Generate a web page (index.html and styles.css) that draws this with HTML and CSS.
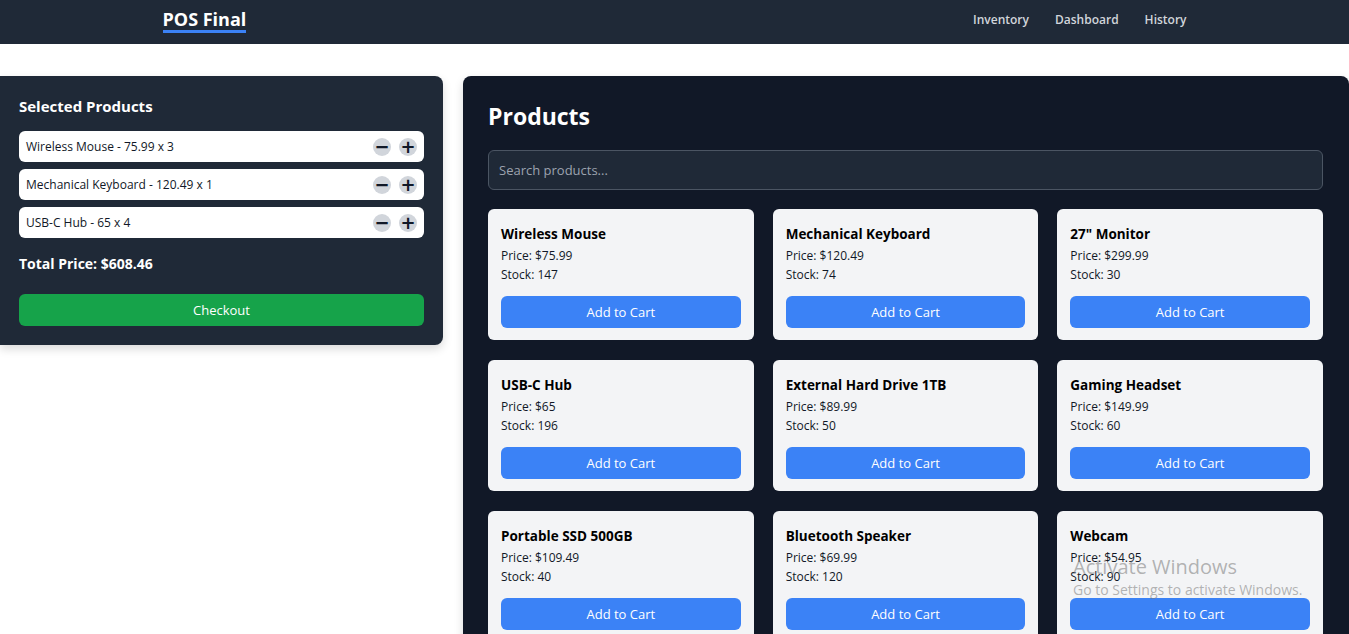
FILE: index.html
```html
<!DOCTYPE html>
<html lang="en">
<head>
<meta charset="utf-8">
<title>POS Final</title>
<link rel="stylesheet" href="styles.css">
</head>
<body>
<nav class="navbar">
  <div class="nav-inner">
    <a class="brand" href="#">POS Final</a>
    <div class="nav-links">
      <a href="#">Inventory</a>
      <a href="#">Dashboard</a>
      <a href="#">History</a>
    </div>
  </div>
</nav>
<main class="layout">
  <aside class="cart">
    <h2 class="cart-title">Selected Products</h2>
    <ul class="cart-list">
      <li class="cart-item"><span>Wireless Mouse - 75.99 x 3</span><span class="qty"><button class="round">&minus;</button><button class="round">+</button></span></li>
      <li class="cart-item"><span>Mechanical Keyboard - 120.49 x 1</span><span class="qty"><button class="round">&minus;</button><button class="round">+</button></span></li>
      <li class="cart-item"><span>USB-C Hub - 65 x 4</span><span class="qty"><button class="round">&minus;</button><button class="round">+</button></span></li>
    </ul>
    <p class="total">Total Price: $608.46</p>
    <button class="checkout">Checkout</button>
  </aside>
  <section class="products">
    <h1 class="products-title">Products</h1>
    <input class="search" type="text" placeholder="Search products...">
    <div class="grid">
      <div class="card"><h3>Wireless Mouse</h3><p>Price: $75.99</p><p>Stock: 147</p><button class="add">Add to Cart</button></div>
      <div class="card"><h3>Mechanical Keyboard</h3><p>Price: $120.49</p><p>Stock: 74</p><button class="add">Add to Cart</button></div>
      <div class="card"><h3>27" Monitor</h3><p>Price: $299.99</p><p>Stock: 30</p><button class="add">Add to Cart</button></div>
      <div class="card"><h3>USB-C Hub</h3><p>Price: $65</p><p>Stock: 196</p><button class="add">Add to Cart</button></div>
      <div class="card"><h3>External Hard Drive 1TB</h3><p>Price: $89.99</p><p>Stock: 50</p><button class="add">Add to Cart</button></div>
      <div class="card"><h3>Gaming Headset</h3><p>Price: $149.99</p><p>Stock: 60</p><button class="add">Add to Cart</button></div>
      <div class="card"><h3>Portable SSD 500GB</h3><p>Price: $109.49</p><p>Stock: 40</p><button class="add">Add to Cart</button></div>
      <div class="card"><h3>Bluetooth Speaker</h3><p>Price: $69.99</p><p>Stock: 120</p><button class="add">Add to Cart</button></div>
      <div class="card"><h3>Webcam</h3><p>Price: $54.95</p><p>Stock: 90</p><button class="add">Add to Cart</button></div>
    </div>
  </section>
</main>
<div class="watermark">
  <div class="wm-big">Activate Windows</div>
  <div class="wm-small">Go to Settings to activate Windows.</div>
</div>
</body>
</html>
```
FILE: styles.css
```css
* { box-sizing: border-box; }
html, body { margin: 0; padding: 0; }
body {
  font-family: "Segoe UI", "Open Sans", "Noto Sans", sans-serif;
  background: #ffffff;
  color: #111827;
  overflow: hidden;
}
.navbar {
  background: #1f2937;
  height: 44px;
}
.nav-inner {
  max-width: 1024px;
  margin: 0 auto;
  height: 44px;
  padding-bottom: 6px;
  display: flex;
  align-items: center;
  justify-content: space-between;
}
.brand {
  color: #ffffff;
  font-weight: 700;
  font-size: 18px;
  text-decoration: none;
  line-height: 22px;
  border-bottom: 3px solid #3b82f6;
  margin-top: 3px;
}
.nav-links {
  display: flex;
  gap: 26px;
}
.nav-links a {
  color: #d1d5db;
  font-size: 12px;
  font-weight: 600;
  text-decoration: none;
}
.layout {
  display: grid;
  grid-template-columns: 1fr 2fr;
  gap: 20px;
  margin-top: 32px;
  align-items: start;
}
.cart {
  min-width: 0;
  background: #1f2937;
  border-radius: 0 8px 8px 0;
  padding: 19px 19px 19px;
  box-shadow: 0 4px 10px rgba(0,0,0,0.15);
}
.cart-title {
  margin: 0 0 14px;
  color: #ffffff;
  font-size: 15px;
  font-weight: 700;
  line-height: 22px;
}
.cart-list {
  list-style: none;
  margin: 0;
  padding: 0;
  display: flex;
  flex-direction: column;
  gap: 7px;
}
.cart-item {
  background: #ffffff;
  border-radius: 6px;
  height: 31px;
  padding: 0 7px;
  display: flex;
  align-items: center;
  justify-content: space-between;
  font-size: 12px;
  color: #111827;
}
.qty { display: flex; gap: 8px; }
.round {
  width: 18px;
  height: 18px;
  border-radius: 50%;
  border: none;
  background: #d1d5db;
  color: #111827;
  font-size: 18px;
  font-weight: 700;
  line-height: 18px;
  padding: 0;
  display: flex;
  align-items: center;
  justify-content: center;
  font-family: "DejaVu Sans", sans-serif;
}
.total {
  margin: 17px 0 21px;
  color: #ffffff;
  font-weight: 700;
  font-size: 14px;
  line-height: 18px;
}
.checkout {
  display: block;
  width: 100%;
  height: 32px;
  border: none;
  border-radius: 6px;
  background: #16a34a;
  color: #ffffff;
  font-family: inherit;
  font-size: 13px;
}
.products {
  min-width: 0;
  background: #111827;
  border-radius: 8px 8px 0 0;
  padding: 24px 26px 24px 25px;
  min-height: 700px;
  box-shadow: 0 4px 10px rgba(0,0,0,0.15);
}
.products-title {
  margin: 0 0 18px;
  color: #ffffff;
  font-size: 23px;
  font-weight: 700;
  line-height: 32px;
}
.search {
  display: block;
  width: 100%;
  height: 40px;
  background: #1f2937;
  border: 1px solid #4b5563;
  border-radius: 6px;
  padding: 0 10px;
  color: #ffffff;
  font-family: inherit;
  font-size: 13px;
}
.search::placeholder { color: #9ca3af; }
.grid {
  margin-top: 19px;
  display: grid;
  grid-template-columns: repeat(3, 1fr);
  gap: 20px 19px;
}
.card {
  background: #f3f4f6;
  border-radius: 6px;
  padding: 13px 13px 12px;
}
.card h3 {
  margin: 0;
  font-size: 13.5px;
  font-weight: 700;
  line-height: 24px;
  color: #000000;
}
.card p {
  margin: 0;
  font-size: 12px;
  line-height: 19px;
  color: #111827;
}
.add {
  display: block;
  margin-top: 12px;
  width: 100%;
  height: 32px;
  border: none;
  border-radius: 6px;
  background: #3b82f6;
  color: #ffffff;
  font-family: inherit;
  font-size: 13px;
}
.watermark {
  position: absolute;
  left: 1073px;
  top: 554px;
  color: rgba(120,120,120,0.55);
  pointer-events: none;
}
.wm-big { font-size: 20px; line-height: 26px; }
.wm-small { font-size: 14px; line-height: 20px; }
```
